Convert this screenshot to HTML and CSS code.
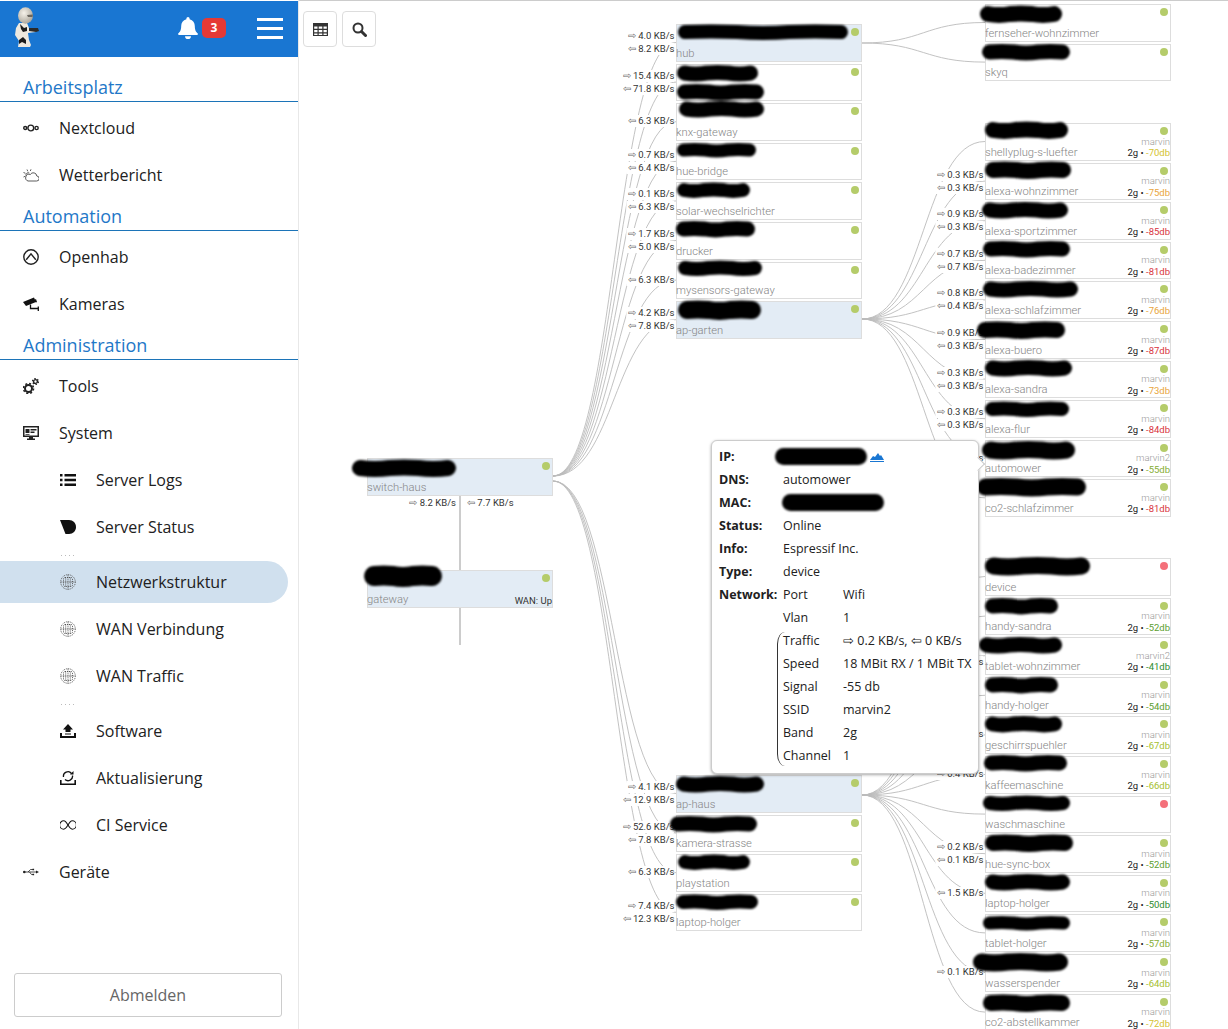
FILE: index.html
```html
<!DOCTYPE html>
<html>

<head>
    <meta charset="utf-8">
    <title>Netzwerkstruktur</title>
    <link rel="stylesheet" href="styles.css">
</head>

<body>
    <div id="sidebar">
        <div id="header">
            <svg class="logo" viewBox="0 0 28 42" width="28" height="42">
                <defs>
                    <radialGradient id="head" cx="40%" cy="35%" r="70%">
                        <stop offset="0" stop-color="#f6f2ea" />
                        <stop offset="1" stop-color="#a8a297" />
                    </radialGradient>
                </defs>
                <path d="M7 16 L15 16 L17 21 L24 22 L24 25 L16 26 L17 33 L19 38 L18 40 H6 L7 34 L3 28 L4 21 Z" fill="#eee9df" />
                <path d="M8 17 L12 21 L15 20 L15 24 L11 25 L9 22 Z" fill="#1c1c1c" />
                <path d="M7 33 L11 30 L14 33 L14 37 L10 35 L7 37 Z" fill="#1c1c1c" />
                <path d="M17 21 L26 21 L27 24 L24 25 L17 24 Z" fill="#2a2a2a" />
                <ellipse cx="13.500" cy="8.500" rx="7.500" ry="8.200" fill="url(#head)" />
                <path d="M15 8 L21 7.500 L20.500 10 L16 10 Z" fill="#6a665f" />
            </svg>
            <svg class="bell" viewBox="0 0 20 22" width="20" height="22">
                <path fill="#fff" d="M10 0a1.6 1.6 0 0 0-1.6 1.6v.7C5 3 3.2 5.8 3.2 9c0 4.5-1.4 6-3 7.6-.4.5 0 1.4.7 1.4h18.2c.7 0 1.1-.9.7-1.4-1.6-1.6-3-3.1-3-7.6 0-3.2-1.8-6-5.2-6.7v-.7A1.6 1.6 0 0 0 10 0zM7 19.2a3 3 0 0 0 6 0z" />
            </svg>
            <span class="badge">3</span>
            <div class="burger"><span></span><span></span><span></span></div>
        </div>

        <div class="section first">Arbeitsplatz</div>
        <a class="row">
            <svg class="icon" viewBox="0 0 16 10"><g fill="none" stroke="#222" stroke-width="1.4"><circle cx="2.2" cy="5" r="1.5" /><circle cx="7.8" cy="5" r="2.9" /><circle cx="13.6" cy="5" r="1.6" /></g></svg>
            Nextcloud
        </a>
        <a class="row">
            <svg class="icon" viewBox="0 0 16 14"><g fill="none" stroke="#333" stroke-width=".8"><path d="M5 13h8.500a2.500 2.500 0 0 0 .3-5 3.500 3.500 0 0 0-6.500-1.500A3.200 3.200 0 0 0 5 13z" /><path d="M6.300 5A2.300 2.300 0 0 0 3 7.500M4 1.500l.8 1.800M.5 4.500l2 .8M.5 9l1.800-.8M8 1.300l-.7 1.700" /></g></svg>
            Wetterbericht
        </a>

        <div class="section">Automation</div>
        <a class="row">
            <svg class="icon" viewBox="0 0 16 16"><g fill="none" stroke="#222" stroke-width="1.400"><circle cx="8" cy="8" r="7.200" /><path d="M3.200 10.800L8 4.800l4.800 6" /></g></svg>
            Openhab
        </a>
        <a class="row">
            <svg class="icon" viewBox="0 0 16 14"><path fill="#111" d="M0 5L11 .5l2 4.500L3 9zM13 2l1 3-1 .5-1-3z" /><path fill="none" stroke="#111" stroke-width="1.300" d="M7.500 7.500V11.500H15M15.300 9.500V14" /></svg>
            Kameras
        </a>

        <div class="section">Administration</div>
        <a class="row">
            <svg class="icon" viewBox="0 0 16 16"><g fill="none" stroke="#222"><circle cx="5.500" cy="10.500" r="3.500" stroke-width="2" /><circle cx="5.500" cy="10.500" r="5" stroke-width="1.600" stroke-dasharray="2 1.930" /><circle cx="12.500" cy="3.500" r="1.900" stroke-width="1.400" /><circle cx="12.500" cy="3.500" r="3" stroke-width="1.200" stroke-dasharray="1.500 1.640" /></g></svg>
            Tools
        </a>
        <a class="row">
            <svg class="icon" viewBox="0 0 16 14"><path fill="#222" d="M0 0h16v11H10v1.500h2V14H4v-1.500h2V11H0z" /><path fill="#fff" d="M1.500 1.500h13v8h-13z" /><path fill="#222" d="M2.500 3h4v4h-4zM7.500 3h6v1.500h-6zM7.500 5.500h4V7h-4zM2.500 8h4v.8h-4z" /></svg>
            System
        </a>
        <a class="row sub">
            <svg class="icon" viewBox="0 0 16 12"><path fill="#111" d="M0 0h2.500v2.500H0zM4.500 0H16v2.500H4.500zM0 4.700h2.500v2.500H0zM4.500 4.700H16v2.500H4.500zM0 9.500h2.500V12H0zM4.500 9.500H16V12H4.500z" /></svg>
            Server Logs
        </a>
        <a class="row sub">
            <svg class="icon" viewBox="0 0 16 14"><path fill="#111" d="M0 0H9C13 0 16 3 16 7 16 11 13 14 9 14H5.500Z" /></svg>
            Server Status
        </a>
        <div class="dots"></div>
        <a class="row sub active">
            <svg class="icon"><use href="#net" /></svg>
            Netzwerkstruktur
        </a>
        <a class="row sub">
            <svg class="icon"><use href="#net" /></svg>
            WAN Verbindung
        </a>
        <a class="row sub">
            <svg class="icon"><use href="#net" /></svg>
            WAN Traffic
        </a>
        <div class="dots"></div>
        <a class="row sub">
            <svg class="icon" viewBox="0 0 16 14"><path fill="#111" d="M8 0l5 5.500H10.500V8h-5V5.500H3zM0 9h2v3h12V9h2v5H0zM5 9.500h6v1H5z" /></svg>
            Software
        </a>
        <a class="row sub">
            <svg class="icon" viewBox="0 0 16 14"><g fill="none" stroke="#111" stroke-width="1.300"><path d="M3.500 6A4.500 4.500 0 0 1 11.500 2.500M12.500 4.500A4.500 4.500 0 0 1 5 8.500" /></g><path fill="#111" d="M10 3.500h3.500V0zM0 9h1.600v3.400h12.800V9H16v5H0z" /></svg>
            Aktualisierung
        </a>
        <a class="row sub">
            <svg class="icon" viewBox="0 0 16 10"><path fill="none" stroke="#111" stroke-width="1.100" d="M8 5C6.500 2.500 5.500.8 3.800.8a4.200 4.200 0 0 0 0 8.400C5.500 9.200 6.500 7.500 8 5s2.500-4.200 4.200-4.200a4.200 4.200 0 0 1 0 8.400C10.500 9.200 9.500 7.500 8 5z" /></svg>
            CI Service
        </a>
        <a class="row">
            <svg class="icon" viewBox="0 0 16 8"><circle cx="1.300" cy="4" r="1.300" fill="#222" /><path fill="none" stroke="#222" stroke-width=".8" d="M2 4h11M5 4l2.500-2.500H10M6.500 4L8.500 6.500H10" /><path fill="#222" d="M13 2.500L16 4l-3 1.500zM9.500.8h1.600v1.500H9.500zM9.500 5.800h1.600v1.500H9.500z" /></svg>
            Geräte
        </a>

        <button class="logout">Abmelden</button>
    </div>

    <div id="main">
        <div id="tools">
            <button class="tool">
                <svg viewBox="0 0 15 13" width="15" height="13"><path fill="#333" d="M0 0h15v13H0zM1.200 3.500v2.300H4.500V3.500zM5.700 3.500v2.300h3.600V3.500zM10.500 3.500v2.300h3.300V3.500zM1.200 7v2.300H4.500V7zM5.700 7v2.300h3.600V7zM10.500 7v2.300h3.300V7zM1.200 10.500v1.400H4.500v-1.400zM5.700 10.500v1.400h3.600v-1.400zM10.500 10.500v1.400h3.300v-1.400z" /></svg>
            </button>
            <button class="tool">
                <svg viewBox="0 0 15 15" width="15" height="15"><circle cx="6" cy="6" r="4.500" fill="none" stroke="#333" stroke-width="2" /><path d="M9.500 9.500L13.500 13.500" stroke="#333" stroke-width="3" stroke-linecap="round" /></svg>
            </button>
        </div>
        <div id="canvas"></div>

        <div id="tip">
            <b>IP:</b>
            <span class="wide"><i class="redact ip"></i><svg class="chart" viewBox="0 0 14 10" width="14" height="10"><path fill="#1976d2" d="M0 8L3 4l2 1 3-4 2 3 1-1 3 5z" /><path stroke="#1976d2" d="M0 9.500h14" /></svg></span>
            <b>DNS:</b><span class="wide">automower</span>
            <b>MAC:</b><span class="wide"><i class="redact mac"></i></span>
            <b>Status:</b><span class="wide">Online</span>
            <b>Info:</b><span class="wide">Espressif Inc.</span>
            <b>Type:</b><span class="wide">device</span>
            <b>Network:</b><span>Port</span><span>Wifi</span>
            <b></b><span>Vlan</span><span>1</span>
            <b></b><span>Traffic</span><span>⇨ 0.2 KB/s, ⇦ 0 KB/s</span>
            <b></b><span>Speed</span><span>18 MBit RX / 1 MBit TX</span>
            <b></b><span>Signal</span><span>-55 db</span>
            <b></b><span>SSID</span><span>marvin2</span>
            <b></b><span>Band</span><span>2g</span>
            <b></b><span>Channel</span><span>1</span>
            <i class="brace"></i>
        </div>
    </div>

    <svg class="defs" width="0" height="0">
        <symbol id="net" viewBox="0 0 16 16">
            <g fill="none" stroke="#555" stroke-width="1" stroke-dasharray="1 1">
                <circle cx="8" cy="8" r="7.300" />
                <rect x="3.500" y="3.500" width="9" height="9" rx="1.500" />
                <path d="M8 .7v14.600M.7 8h14.600M5.700 3.500v9M10.300 3.500v9" />
            </g>
        </symbol>
    </svg>

    <script src="script.js"></script>
</body>

</html>
```

FILE: styles.css
```css
* {
    margin: 0;
    padding: 0;
    box-sizing: border-box;
}

body {
    display: flex;
    height: 100vh;
    overflow: hidden;
    background: #fff;
    color: #212121;
    font-family: "Open Sans", "Liberation Sans", sans-serif;
}

.defs {
    position: absolute;
}

/* sidebar */
#sidebar {
    width: 299px;
    flex: none;
    display: flex;
    flex-direction: column;
    border-right: 1px solid #e8e8e8;
    padding-top: 1px;
    background: #fff;
}

#header {
    height: 56px;
    flex: none;
    display: flex;
    align-items: center;
    background: #1976d2;
    padding-left: 12px;
}

.logo {
    margin-top: -2px;
}

.bell {
    margin-left: 138px;
    margin-top: -2px;
}

.badge {
    width: 24px;
    height: 20px;
    margin-left: 4px;
    margin-top: -2px;
    border-radius: 5px;
    background: #e53935;
    color: #fff;
    font-size: 12px;
    font-weight: 700;
    line-height: 20px;
    text-align: center;
}

.burger {
    width: 26px;
    margin-left: 31px;
    margin-top: -1px;
    display: flex;
    flex-direction: column;
    gap: 6px;
}

.burger span {
    height: 3px;
    background: #fff;
}

.section {
    height: 32px;
    margin-bottom: 3px;
    padding-left: 23px;
    border-bottom: 1px solid #1c74b8;
    color: #1f78c8;
    font-size: 18px;
    line-height: 35px;
}

.section.first {
    margin-top: 12.5px;
}

.row {
    height: 47px;
    flex: none;
    display: flex;
    align-items: center;
    gap: 20px;
    padding-left: 23px;
    font-size: 16px;
}

.row.sub {
    padding-left: 60px;
}

.row.active {
    width: 288px;
    height: 42px;
    margin: 2.5px 0;
    border-radius: 0 21px 21px 0;
    background: #d0e0ee;
}

.icon {
    width: 16px;
    height: 16px;
    flex: none;
}

.dots {
    height: 8px;
    flex: none;
    margin-left: 61px;
    width: 15px;
    background: repeating-linear-gradient(90deg, #bbb 0 1px, transparent 1px 4px) 0 4px / 100% 1px no-repeat;
}

.logout {
    margin: auto 16px 12px 14px;
    height: 44px;
    flex: none;
    border: 1px solid #ccc;
    border-radius: 3px;
    background: #fff;
    color: #666;
    font: 16px "Open Sans", sans-serif;
}

/* main */
#main {
    flex: 1;
    position: relative;
    border-top: 1px solid #ccc;
}

#tools {
    position: relative;
    z-index: 1;
    display: flex;
    gap: 5px;
    padding: 10px 0 0 4px;
}

.tool {
    width: 34px;
    height: 36px;
    display: flex;
    align-items: center;
    justify-content: center;
    border: 1px solid #ddd;
    border-radius: 4px;
    background: #fff;
}

/* diagram */
#canvas {
    position: absolute;
    inset: 0;
    overflow: hidden;
    z-index: 0;
}

.edges,
.marks {
    position: absolute;
    left: 0;
    top: 0;
}

.edges path {
    fill: none;
    stroke: #bbb;
    stroke-width: .9;
}

.edges .trunk {
    stroke: #ccc;
    stroke-width: 2;
}

.marks {
    filter: blur(.8px);
    z-index: 3;
}

.marks path {
    fill: none;
    stroke: #000;
    stroke-linecap: round;
    stroke-linejoin: round;
}

.node {
    position: absolute;
    width: 186px;
    height: 37.5px;
    display: flex;
    align-items: flex-end;
    justify-content: space-between;
    border: 1px solid #ddd;
    background: #fff;
    font-family: Roboto, "Liberation Sans", sans-serif;
    z-index: 1;
}

.node.group {
    background: #e3ecf5;
}

.name {
    margin-left: -1px;
    color: #858585;
    font-size: 11.2px;
    font-weight: 300;
    line-height: 14px;
}

.dot {
    position: absolute;
    right: 2px;
    top: 3px;
    width: 8px;
    height: 8px;
    border-radius: 50%;
    background: #b5cc6a;
}

.dot.off {
    background: #f4707a;
}

.info {
    font-size: 9.5px;
    line-height: 11.500px;
    text-align: right;
    padding-bottom: 1px;
}

.info .ssid {
    display: block;
    color: #999;
    font-weight: 300;
}

.wan {
    color: #333;
    font-size: 9.5px;
    line-height: 11px;
    padding-bottom: 1px;
}

.traffic {
    position: absolute;
    transform: translate(-100%, -50%);
    background: #fff;
    color: #333;
    font-family: Roboto, "Liberation Sans", sans-serif;
    font-size: 9.5px;
    line-height: 12px;
    padding-left: 2px;
    white-space: nowrap;
    z-index: 2;
}

.traffic.ltr {
    transform: translate(0, -50%);
}

.traffic em {
    color: #666;
    font-style: normal;
    font-size: 10px;
}

/* details popup */
#tip {
    position: absolute;
    left: 412px;
    top: 439px;
    width: 268px;
    height: 334px;
    padding: 4px 7px;
    display: grid;
    grid-template-columns: 64px 60px 1fr;
    grid-auto-rows: 23px;
    align-items: center;
    border: 1px solid #ccc;
    border-radius: 6px;
    background: #fff;
    box-shadow: 0 1px 3px rgba(0, 0, 0, .35);
    font-size: 12.5px;
    white-space: nowrap;
    z-index: 5;
}

#tip::after {
    content: "";
    position: absolute;
    right: -5px;
    top: 18px;
    width: 9px;
    height: 9px;
    background: #fff;
    border-top: 1px solid #ccc;
    border-right: 1px solid #ccc;
    transform: rotate(45deg);
}

#tip b {
    font-weight: 700;
}

#tip .wide {
    grid-column: span 2;
    display: flex;
    align-items: center;
}

.redact {
    display: block;
    height: 17px;
    border-radius: 9px;
    background: #000;
    filter: blur(.8px);
}

.redact.ip {
    width: 92px;
    margin-left: -8px;
}

.redact.mac {
    width: 102px;
    margin-left: -1px;
}

.chart {
    margin-left: 3px;
}

.brace {
    position: absolute;
    left: 65px;
    top: 191px;
    width: 8px;
    height: 134px;
    border-left: 1px solid #333;
    border-radius: 8px 0 0 8px / 12px 0 0 12px;
}
```

FILE: script.js
```js
window.onload = function () {
    var canvas = document.getElementById('canvas');
    var OX = 299, OY = 1;
    var W = 929, H = 1028;
    var STEP = 39.6;
    var edgePaths = '';
    var markPaths = '';
    var markCount = 0;

    function dbColor(db) {
        if (db >= -50) return '#2e8b2e';
        if (db >= -54) return '#5c9e31';
        if (db >= -57) return '#85ad33';
        if (db >= -67) return '#a5c030';
        if (db >= -72) return '#d4c230';
        if (db >= -76) return '#e9a53c';
        return '#d8323c';
    }

    function addNode(n, x, y) {
        var el = document.createElement('div');
        el.className = 'node' + (n.group ? ' group' : '');
        el.style.left = (x - OX) + 'px';
        el.style.top = (y - OY) + 'px';
        var html = '<span class="name">' + n.name + '</span>';
        html += '<i class="dot' + (n.off ? ' off' : '') + '"></i>';
        if (n.db) {
            html += '<span class="info"><span class="ssid">' + (n.ssid || 'marvin') + '</span>2g • ' +
                '<span style="color:' + dbColor(n.db) + '">' + n.db + 'db</span></span>';
        }
        if (n.wan) {
            html += '<span class="wan">' + n.wan + '</span>';
        }
        el.innerHTML = html;
        canvas.appendChild(el);
    }

    function addEdge(x0, y0, x1, y1) {
        var m = (x0 + x1) / 2;
        edgePaths += '<path d="M' + (x0 - OX) + ' ' + (y0 - OY) + 'C' + (m - OX) + ' ' + (y0 - OY) + ' ' +
            (m - OX) + ' ' + (y1 - OY) + ' ' + (x1 - OX) + ' ' + (y1 - OY) + '"/>';
    }

    function addTraffic(text, x, y, ltr) {
        var el = document.createElement('div');
        el.className = 'traffic' + (ltr ? ' ltr' : '');
        el.style.left = (x - OX) + 'px';
        el.style.top = (y - OY) + 'px';
        el.innerHTML = text;
        canvas.appendChild(el);
    }

    var OUT = '<em>⇨</em> ', IN = '<em>⇦</em> ';

    // out/in are the KB/s figures, mark is the blacked out name as [x0, x1, y, height]
    function addColumn(list, x, top, from, labelX) {
        list.forEach(function (n, i) {
            var y = top + i * STEP;
            addNode(n, x, y);
            addEdge(from[0], from[1], x, y + 18.5);
            if (n.out && n.inn) {
                addTraffic(OUT + n.out + ' KB/s', labelX, y + 12);
                addTraffic(IN + n.inn + ' KB/s', labelX, y + 25);
            } else if (n.out) {
                addTraffic(OUT + n.out + ' KB/s', labelX, y + 18);
            } else if (n.inn) {
                addTraffic(IN + n.inn + ' KB/s', labelX, y + 18);
            }
            if (n.tail) {
                addTraffic(n.tail, labelX, y + 25);
            }
            (n.marks || []).forEach(addMark);
        });
    }

    // hand drawn looking stroke: the waves differ from mark to mark
    function addMark(m) {
        var h = m[3] + 1, x0 = m[0] + h / 2 - OX, x1 = m[1] - h / 2 - OX, y = m[2] - OY;
        var d = 'M' + x0 + ' ' + y;
        var parts = 3;
        markCount++;
        for (var i = 1; i <= parts; i++) {
            var px = x0 + (x1 - x0) * i / parts;
            var side = (i + markCount) % 2 ? 1 : -1;
            var cy = y + side * (1 + (markCount * 7 + i * 3) % 2);
            d += 'Q' + (px - (x1 - x0) / parts / 2) + ' ' + cy + ' ' + px + ' ' + y;
        }
        markPaths += '<path stroke-width="' + h + '" d="' + d + '"/>';
    }

    addColumn([
        { name: 'hub', group: true, out: '4.0', inn: '8.2', marks: [[678, 848, 32, 13]] },
        { name: '', out: '15.4', inn: '71.8', marks: [[677, 758, 73, 14], [677, 764, 92, 14]] },
        { name: 'knx-gateway', inn: '6.3', marks: [[679, 764, 109, 14]] },
        { name: 'hue-bridge', out: '0.7', inn: '6.4', marks: [[677, 756, 150, 12]] },
        { name: 'solar-wechselrichter', out: '0.1', inn: '6.3', marks: [[677, 750, 190, 13]] },
        { name: 'drucker', out: '1.7', inn: '5.0', marks: [[676, 755, 229, 14]] },
        { name: 'mysensors-gateway', inn: '6.3', marks: [[678, 762, 268, 13]] },
        { name: 'ap-garten', group: true, out: '4.2', inn: '7.8', marks: [[678, 761, 310, 17]] }
    ], 676, 24, [553, 476], 674.5);

    addColumn([
        { name: 'ap-haus', group: true, out: '4.1', inn: '12.9', marks: [[676, 764, 784, 14]] },
        { name: 'kamera-strasse', out: '52.6', inn: '7.8', marks: [[670, 757, 824, 14]] },
        { name: 'playstation', inn: '6.3', marks: [[678, 750, 862, 13]] },
        { name: 'laptop-holger', out: '7.4', inn: '12.3', marks: [[676, 758, 902, 13]] }
    ], 676, 775, [553, 481], 674.5);

    addColumn([
        { name: 'fernseher-wohnzimmer', marks: [[980, 1062, 14, 15]] },
        { name: 'skyq', marks: [[982, 1070, 52, 14]] }
    ], 985, 4, [862, 43], 983.5);

    addColumn([
        { name: 'shellyplug-s-luefter', db: -70, marks: [[985, 1068, 130, 15]] },
        { name: 'alexa-wohnzimmer', db: -75, out: '0.3', inn: '0.3', marks: [[985, 1071, 170, 15]] },
        { name: 'alexa-sportzimmer', db: -85, out: '0.9', inn: '0.3', marks: [[982, 1068, 210, 14]] },
        { name: 'alexa-badezimmer', db: -81, out: '0.7', inn: '0.7', marks: [[983, 1070, 249, 14]] },
        { name: 'alexa-schlafzimmer', db: -76, out: '0.8', inn: '0.4', marks: [[983, 1078, 289, 14]] },
        { name: 'alexa-buero', db: -87, out: '0.9', inn: '0.3', marks: [[977, 1065, 330, 15]] },
        { name: 'alexa-sandra', db: -73, out: '0.3', inn: '0.3', marks: [[985, 1072, 368, 14]] },
        { name: 'alexa-flur', db: -84, out: '0.3', inn: '0.3', marks: [[985, 1069, 409, 13]] },
        { name: 'automower', db: -55, ssid: 'marvin2', out: '0.2', marks: [[982, 1075, 450, 16]] },
        { name: 'co2-schlafzimmer', db: -81, marks: [[977, 1086, 487, 16]] }
    ], 985, 123, [862, 319], 983.5);

    addColumn([
        { name: 'device', off: true, marks: [[985, 1090, 566, 16]] },
        { name: 'handy-sandra', db: -52, marks: [[985, 1058, 606, 14]] },
        { name: 'tablet-wohnzimmer', db: -41, ssid: 'marvin2', tail: '/s', marks: [[979, 1062, 645, 14]] },
        { name: 'handy-holger', db: -54, marks: [[985, 1058, 685, 14]] },
        { name: 'geschirrspuehler', db: -67, out: '0.2', marks: [[985, 1062, 724, 14]] },
        { name: 'kaffeemaschine', db: -66, out: '0.4', marks: [[984, 1067, 763, 14]] },
        { name: 'waschmaschine', off: true, marks: [[983, 1070, 803, 13]] },
        { name: 'hue-sync-box', db: -52, out: '0.2', inn: '0.1', marks: [[985, 1073, 843, 15]] },
        { name: 'laptop-holger', db: -50, inn: '1.5', marks: [[985, 1070, 882, 14]] },
        { name: 'tablet-holger', db: -57, marks: [[983, 1070, 923, 12]] },
        { name: 'wasserspender', db: -64, out: '0.1', marks: [[973, 1068, 962, 16]] },
        { name: 'co2-abstellkammer', db: -72, marks: [[983, 1070, 1003, 15]] }
    ], 985, 558, [862, 795], 983.5);

    addNode({ name: 'switch-haus', group: true }, 367, 458);
    addNode({ name: 'gateway', group: true, wan: 'WAN: Up' }, 367, 570);
    addMark([352, 456, 468, 15]);
    addMark([364, 442, 576, 19]);
    addTraffic(OUT + '8.2 KB/s', 456, 503);
    addTraffic(IN + '7.7 KB/s', 465, 503, true);
    edgePaths += '<path class="trunk" d="M' + (460 - OX) + ' ' + (495 - OY) + 'V' + (645 - OY) + '"/>';

    canvas.insertAdjacentHTML('afterbegin',
        '<svg class="edges" width="' + W + '" height="' + H + '">' + edgePaths + '</svg>');
    canvas.insertAdjacentHTML('beforeend',
        '<svg class="marks" width="' + W + '" height="' + H + '">' + markPaths + '</svg>');
};
```
